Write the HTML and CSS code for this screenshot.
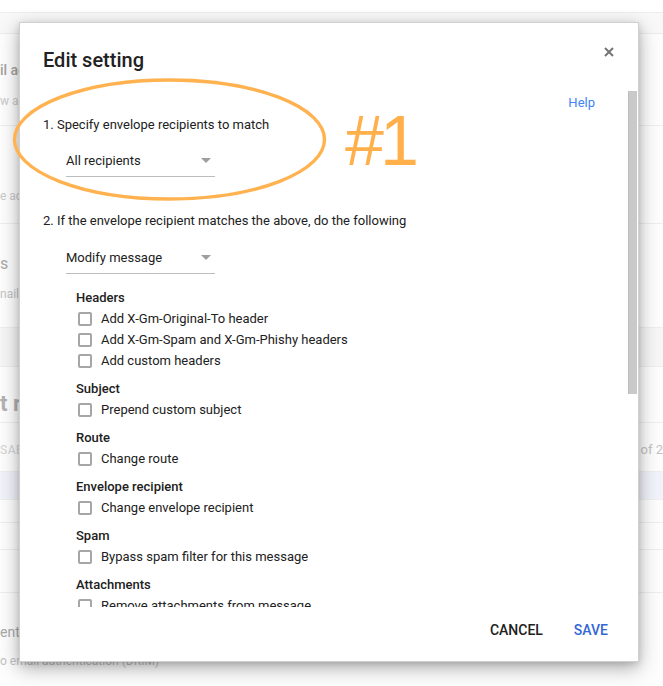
FILE: index.html
```html
<!DOCTYPE html>
<html lang="en">
<head>
<meta charset="utf-8">
<title>Edit setting</title>
<link rel="stylesheet" href="styles.css">
</head>
<body>
<div class="page">
  <div class="bg-top"></div>
  <div class="bg-band"></div>
  <div class="bg-sec sec1"><div class="bg-strong">il ad</div><div class="bg-sub">w a</div></div>
  <div class="bg-sec sec2"><div class="bg-sub">e ac</div></div>
  <div class="bg-sec sec3"><div class="bg-mid">s</div><div class="bg-sub">nail</div></div>
  <div class="bg-sec sec4"></div>
  <div class="bg-sec sec5"><div class="bg-big">t r</div></div>
  <div class="bg-sec sec6"><span class="bg-faint">SAB</span><span class="bg-count">of 2</span></div>
  <div class="bg-sec sec7"></div>
  <div class="bg-sec sec8"></div>
  <div class="bg-sec sec9"></div>
  <div class="bg-sec sec10"></div>
  <div class="bg-sec sec11"><div class="bg-mid2">ent</div><div class="bg-sub">o email authentication (DKIM)</div></div>
</div>

<div class="dialog" role="dialog" aria-label="Edit setting">
  <div class="dlg-head">
    <h2 class="dlg-title">Edit setting</h2>
    <button class="close" aria-label="Close">
      <svg width="10" height="10" viewBox="0 0 10 10"><path d="M1 1L9 9M9 1L1 9" stroke="#757575" stroke-width="2" fill="none"/></svg>
    </button>
  </div>
  <div class="dlg-body">
    <div class="scroll-content">
      <div class="help-row"><a class="help" href="#">Help</a></div>
      <div class="step">1. Specify envelope recipients to match</div>
      <div class="select select1"><span>All recipients</span><span class="caret"></span></div>
      <div class="step step2">2. If the envelope recipient matches the above, do the following</div>
      <div class="select select2"><span>Modify message</span><span class="caret"></span></div>
      <div class="options">
        <div class="group">
          <div class="group-title">Headers</div>
          <div class="opt"><span class="box"></span>Add X-Gm-Original-To header</div>
          <div class="opt"><span class="box"></span>Add X-Gm-Spam and X-Gm-Phishy headers</div>
          <div class="opt"><span class="box"></span>Add custom headers</div>
        </div>
        <div class="group">
          <div class="group-title">Subject</div>
          <div class="opt"><span class="box"></span>Prepend custom subject</div>
        </div>
        <div class="group">
          <div class="group-title">Route</div>
          <div class="opt"><span class="box"></span>Change route</div>
        </div>
        <div class="group">
          <div class="group-title">Envelope recipient</div>
          <div class="opt"><span class="box"></span>Change envelope recipient</div>
        </div>
        <div class="group">
          <div class="group-title">Spam</div>
          <div class="opt"><span class="box"></span>Bypass spam filter for this message</div>
        </div>
        <div class="group">
          <div class="group-title">Attachments</div>
          <div class="opt"><span class="box"></span>Remove attachments from message</div>
        </div>
      </div>
    </div>
    <div class="scrollbar"><div class="thumb"></div></div>
  </div>
  <div class="dlg-foot">
    <button class="btn">Cancel</button>
    <button class="btn primary">Save</button>
  </div>
</div>

<svg class="annot-ellipse" width="663" height="686" viewBox="0 0 663 686" aria-hidden="true">
  <ellipse cx="169.5" cy="139.5" rx="155" ry="59.5" fill="none" stroke="#ffb24f" stroke-width="3.4"/>
</svg>
<div class="annot-num">#1</div>
</body>
</html>
```

FILE: styles.css
```css
* { box-sizing: border-box; }
html, body { margin: 0; padding: 0; }
body {
  width: 663px;
  height: 686px;
  overflow: hidden;
  position: relative;
  background: #fdfdfd;
  font-family: Roboto, "Noto Sans", Arial, sans-serif;
  color: #212121;
}

/* ---------- background page (dimmed) ---------- */
.page {
  width: 663px;
  height: 686px;
  overflow: hidden;
  background: #fdfdfd;
}
.bg-top { height: 13px; background: #fff; border-bottom: 1px solid #ededed; }
.bg-band { height: 21px; background: #f8f8f8; border-bottom: 1px solid #ececec; }
.bg-sec { border-bottom: 1px solid #eeeeee; white-space: nowrap; overflow: hidden; }
.sec1 { height: 92px; padding-top: 26px; }
.sec2 { height: 98px; padding-top: 61px; }
.sec3 { height: 104px; padding-top: 30px; }
.sec4 { height: 39px; background: #f6f6f6; }
.sec5 { height: 56px; padding-top: 24px; }
.sec6 { height: 49px; padding-top: 18px; display: flex; justify-content: space-between; }
.sec7 { height: 28px; background: #f1f3fa; }
.sec8 { height: 23px; }
.sec9 { height: 27px; }
.sec10 { height: 43px; }
.sec11 { border-bottom: none; padding-top: 29px; }

.bg-strong { font-size: 14px; line-height: 20px; font-weight: 500; color: #a3a3a3; }
.bg-sub { font-size: 12px; line-height: 18px; color: #c9c9c9; margin-top: 12px; }
.sec2 .bg-sub { margin-top: 0; }
.bg-mid { font-size: 16px; line-height: 20px; color: #a9a9a9; }
.sec3 .bg-sub { margin-top: 11px; color: #c3c3c3; }
.bg-big { font-size: 22px; line-height: 26px; font-weight: 700; color: #b2b2b2; }
.bg-faint { font-size: 12px; line-height: 18px; color: #d2d2d2; letter-spacing: 0.5px; }
.bg-count { font-size: 13px; line-height: 18px; color: #c3c3c3; }
.bg-mid2 { font-size: 14px; line-height: 20px; color: #a8a8a8; }
.sec11 .bg-sub { margin-top: 10px; color: #c2c2c2; }

/* ---------- dialog ---------- */
.dialog {
  position: absolute;
  left: 19px;
  top: 22px;
  width: 620px;
  height: 640px;
  background: #fff;
  border: 1px solid #d0d0d0;
  box-shadow: 0 6px 18px rgba(0, 0, 0, 0.32), 0 2px 6px rgba(0, 0, 0, 0.12);
  display: flex;
  flex-direction: column;
  z-index: 2;
}
.dlg-head {
  height: 68px;
  flex: none;
  display: flex;
  justify-content: space-between;
  align-items: flex-start;
  padding: 24px 24px 0 23px;
}
.dlg-title {
  margin: 0;
  font-size: 20px;
  line-height: 26px;
  font-weight: 500;
  color: #212121;
}
.close {
  border: 0;
  background: none;
  padding: 0;
  margin-top: 0;
  width: 10px;
  height: 10px;
  display: flex;
  cursor: pointer;
}

.dlg-body {
  height: 516px;
  flex: none;
  display: flex;
}
.scroll-content {
  flex: 1;
  overflow: hidden;
  padding-left: 23px;
  font-size: 13px;
}
.help-row {
  height: 22px;
  line-height: 22px;
  text-align: right;
  padding-right: 33px;
  padding-top: 1px;
}
.help { color: #4285f4; text-decoration: none; font-size: 13px; }
.step { line-height: 18px; margin-top: 3px; color: #212121; }
.step2 { margin-top: 35px; }
.select {
  width: 149px;
  margin-left: 23px;
  display: flex;
  justify-content: space-between;
  align-items: center;
  line-height: 18px;
  padding-bottom: 7px;
  border-bottom: 1px solid #bdbdbd;
  color: #212121;
}
.select1 { margin-top: 17px; }
.select2 { margin-top: 18px; }
.select span:first-child { position: relative; top: 1px; }
.caret {
  width: 0;
  height: 0;
  border-left: 5px solid transparent;
  border-right: 5px solid transparent;
  border-top: 5px solid #9e9e9e;
  margin-right: 4px;
}
.options { margin: 14px 0 0 33px; }
.group + .group { margin-top: 8px; }
.group-title { line-height: 20px; font-weight: 500; color: #212121; }
.opt {
  height: 21px;
  display: flex;
  align-items: center;
  color: #212121;
  white-space: nowrap;
}
.box {
  width: 14px;
  height: 14px;
  border: 2px solid #a6a6a6;
  border-radius: 2px;
  margin: 0 9px 0 2px;
  flex: none;
}

.scrollbar {
  width: 9px;
  flex: none;
  margin-right: 1px;
}
.thumb {
  height: 303px;
  background: #c9c9c9;
  border-left: 1px solid #bcbcbc;
}

.dlg-foot {
  flex: 1;
  display: flex;
  justify-content: flex-end;
  align-items: flex-start;
  padding: 13px 22px 0 0;
  gap: 15px;
}
.btn {
  border: 0;
  background: none;
  padding: 0 8px;
  font-family: Roboto, "Noto Sans", Arial, sans-serif;
  font-size: 14px;
  line-height: 20px;
  font-weight: 500;
  text-transform: uppercase;
  color: #212121;
  cursor: pointer;
}
.btn.primary { color: #3367d6; }

/* ---------- annotation ---------- */
.annot-ellipse {
  position: absolute;
  left: 0;
  top: 0;
  z-index: 3;
  pointer-events: none;
}
.annot-num {
  position: absolute;
  left: 345px;
  top: 106px;
  z-index: 3;
  font-family: "Liberation Sans", Arial, sans-serif;
  font-size: 70px;
  line-height: 1;
  letter-spacing: -4px;
  color: #ffb04b;
}
```
